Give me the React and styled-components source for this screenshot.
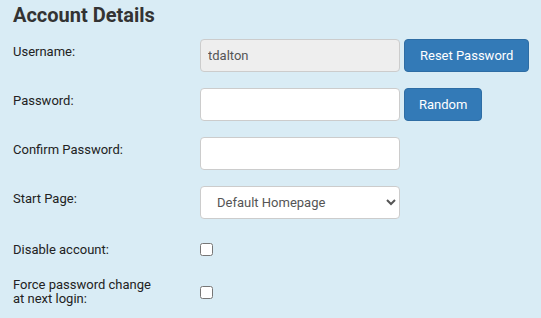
import React from "react";
import styled, { createGlobalStyle } from "styled-components";

const GlobalStyle = createGlobalStyle`
	html, body {
		margin: 0;
		padding: 0;
		background: #d9ecf5;
	}
	body {
		font-family: Roboto, "Liberation Sans", sans-serif;
		color: #333;
	}
`;

const Page = styled.div`
	width: 541px;
	height: 318px;
	padding: 0 0 0 13px;
	box-sizing: border-box;
	background: #d9ecf5;
	overflow: hidden;
`;

const Title = styled.h1`
	margin: 0;
	padding-top: 3px;
	font-size: 20px;
	line-height: 25px;
	font-weight: 700;
	color: #333;
`;

const Form = styled.div`
	display: flex;
	flex-direction: column;
	margin-top: 11px;
`;

const Row = styled.div`
	display: flex;
	align-items: ${(p) => (p.$center ? "center" : "flex-start")};
	margin-bottom: ${(p) => p.$gap || 16}px;
`;

const Label = styled.label`
	width: 170px;
	margin-right: 17px;
	padding-top: ${(p) => (p.$top === undefined ? 6 : p.$top)}px;
	font-size: 13px;
	line-height: 14px;
	color: #222;
	flex-shrink: 0;
`;

const Field = styled.div`
	display: flex;
	gap: 4px;
`;

const TextInput = styled.input`
	width: 200px;
	height: 33px;
	box-sizing: border-box;
	padding: 6px 7px;
	border: 1px solid #ccc;
	border-radius: 4px;
	background: ${(p) => (p.readOnly ? "#eeeeee" : "#fff")};
	color: #555;
	font-family: inherit;
	font-size: 13px;
	outline: none;
`;

const Select = styled.select`
	width: 200px;
	height: 33px;
	box-sizing: border-box;
	padding: 0 8px 0 12px;
	border: 1px solid #ccc;
	border-radius: 4px;
	background: #fff;
	color: #555;
	font-family: inherit;
	font-size: 13px;
	outline: none;
`;

const Button = styled.button`
	height: 33px;
	flex-shrink: 0;
	white-space: nowrap;
	padding: 0 ${(p) => p.$pad || 13}px;
	border: 1px solid #2e6da4;
	border-radius: 4px;
	background: #337ab7;
	color: #fff;
	font-family: inherit;
	font-size: 13px;
	cursor: pointer;
`;

const Check = styled.input`
	width: 13px;
	height: 13px;
	margin: 0;
`;

export default function App() {
	return (
		<Page>
			<GlobalStyle />
			<Title>Account Details</Title>
			<Form>
				<Row>
					<Label>Username:</Label>
					<Field>
						<TextInput readOnly value="tdalton" />
						<Button $pad={15}>Reset Password</Button>
					</Field>
				</Row>
				<Row>
					<Label>Password:</Label>
					<Field>
						<TextInput type="password" />
						<Button $pad={14}>Random</Button>
					</Field>
				</Row>
				<Row>
					<Label>Confirm Password:</Label>
					<Field>
						<TextInput type="password" />
					</Field>
				</Row>
				<Row $gap={24}>
					<Label>Start Page:</Label>
					<Field>
						<Select defaultValue="home">
							<option value="home">Default Homepage</option>
						</Select>
					</Field>
				</Row>
				<Row $gap={21}>
					<Label $top={0}>Disable account:</Label>
					<Check type="checkbox" />
				</Row>
				<Row $center>
					<Label $top={0}>
						Force password change
						<br />
						at next login:
					</Label>
					<Check type="checkbox" />
				</Row>
			</Form>
		</Page>
	);
}
